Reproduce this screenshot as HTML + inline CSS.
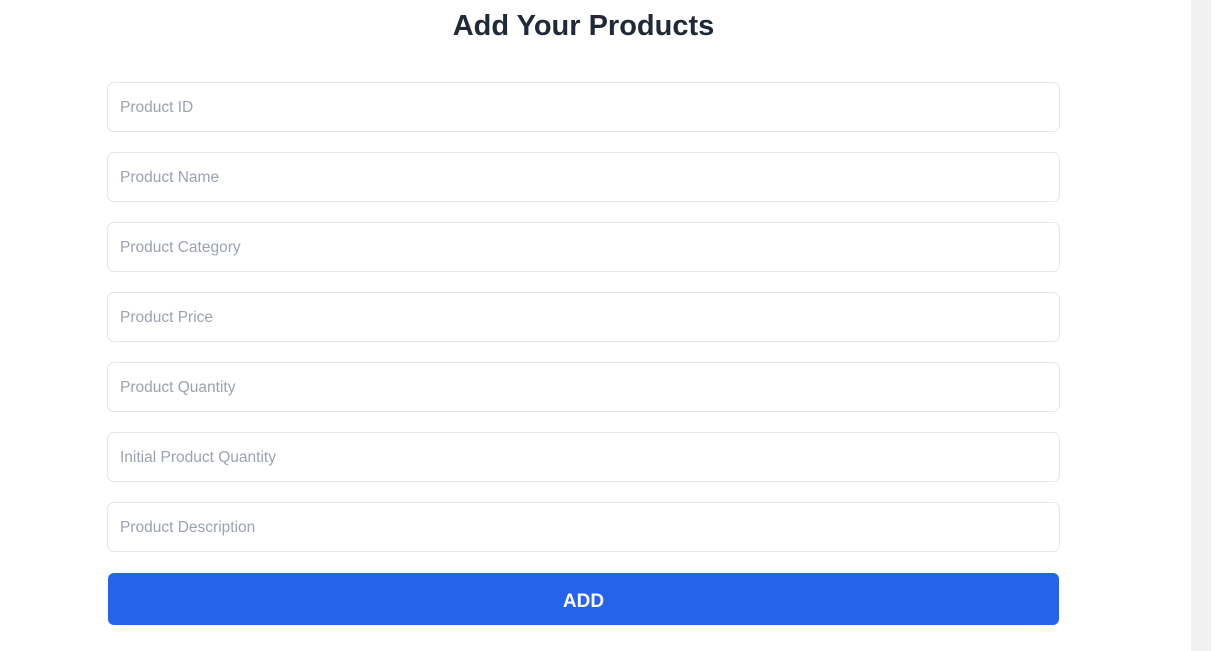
<!DOCTYPE html>
<html><head><style>
html,body{margin:0;padding:0;background:#fff;width:1215px;height:651px;overflow:hidden;font-family:"Liberation Sans",sans-serif;}
.strip{position:absolute;left:1191px;top:0;width:20px;height:651px;background:#f0f1f3;}
h1{position:absolute;left:107px;width:953px;top:7px;margin:0;text-align:center;font-size:29px;font-weight:bold;color:#1f2937;line-height:38px;}
.in{position:absolute;left:107px;width:951px;height:48px;border:1px solid #e5e7eb;border-radius:7px;box-sizing:content-box;}
.in span{position:absolute;left:12px;top:16px;font-size:15.5px;color:#9ca3af;line-height:18px;}
.btn{position:absolute;left:108px;top:573px;width:951px;height:52px;background:#2563eb;border-radius:6px;color:#fff;font-weight:bold;font-size:19px;text-align:center;line-height:57px;}
</style></head><body>
<div class="strip"></div>
<h1>Add Your Products</h1>
<div class="in" style="top:82px"><span>Product ID</span></div>
<div class="in" style="top:152px"><span>Product Name</span></div>
<div class="in" style="top:222px"><span>Product Category</span></div>
<div class="in" style="top:292px"><span>Product Price</span></div>
<div class="in" style="top:362px"><span>Product Quantity</span></div>
<div class="in" style="top:432px"><span>Initial Product Quantity</span></div>
<div class="in" style="top:502px"><span>Product Description</span></div>
<div class="btn">ADD</div>
</body></html>
